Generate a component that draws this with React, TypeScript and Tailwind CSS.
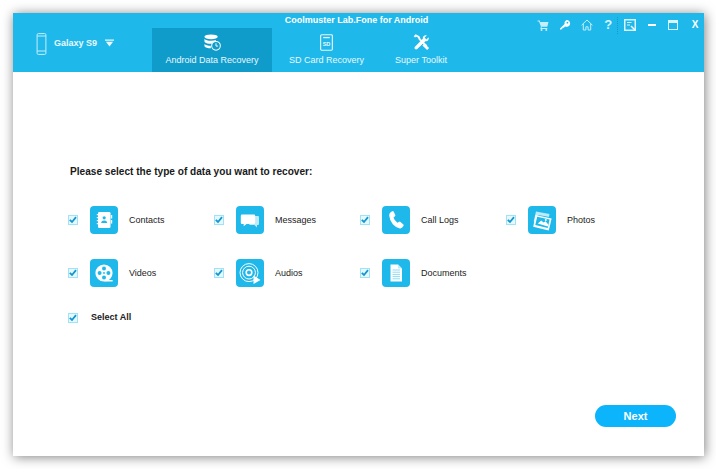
import { ReactNode } from 'react';

function Check() {
  return (
    <span className="ml-[-1px] flex h-[10px] w-[10px] shrink-0 items-center justify-center border border-[#9fe3f8] bg-[#e6f8fe]">
      <svg viewBox="0 0 8 8" className="h-[8px] w-[8px]" fill="none">
        <path d="M.8 3.8 L3 6 L7 1.2" stroke="#1496cf" strokeWidth="1.8" />
      </svg>
    </span>
  );
}

const ContactsIcon = (
  <svg viewBox="0 0 28 28" className="h-7 w-7">
    <rect x="8" y="6" width="12.500" height="16" rx="1.200" fill="#fff" />
    <rect x="6.800" y="8" width="2.400" height="1.200" fill="#fff" />
    <rect x="6.800" y="11" width="2.400" height="1.200" fill="#fff" />
    <rect x="6.800" y="14" width="2.400" height="1.200" fill="#fff" />
    <rect x="6.800" y="17" width="2.400" height="1.200" fill="#fff" />
    <rect x="20.800" y="9" width="1.400" height="3.500" fill="#fff" />
    <rect x="20.800" y="14" width="1.400" height="3.500" fill="#fff" />
    <circle cx="14.200" cy="11.800" r="1.600" fill="#1fb8ea" />
    <path d="M11.200 17 q0-2.600 3-2.600 t3 2.600 z" fill="#1fb8ea" />
  </svg>
);

const MessagesIcon = (
  <svg viewBox="0 0 28 28" className="h-7 w-7">
    <path d="M19 10 h3 q1 0 1 1 v7 q0 1-1 1 h-1 v2.500 l-2.600-2.500 h-5 v-1.500 h5.600 z" fill="#bfeafa" />
    <path d="M6 8.500 h12 q1.200 0 1.200 1.200 v7 q0 1.200-1.200 1.200 h-7.500 l-2.800 2.400 v-2.400 h-1.700 q-1.200 0-1.200-1.200 v-7 q0-1.200 1.200-1.200 z" fill="#fff" />
  </svg>
);

const CallIcon = (
  <svg viewBox="0 0 28 28" className="h-7 w-7">
    <path d="M8.200 6.200 l2.200-1 q.8-.3 1.200.4 l1.700 3.400 q.3.700-.3 1.200 l-1.500 1.200 q.8 2.800 3.900 5.400 l1.800-1 q.7-.4 1.300.1 l2.900 2.600 q.5.5.1 1.200 l-1.300 1.900 q-.8 1-2.400.8 q-3.800-.6-7-4.200 q-3.200-3.600-3.600-8.600 q-.1-2.500 1.600-3.400 z" fill="#fff" />
  </svg>
);

const PhotosIcon = (
  <svg viewBox="0 0 28 28" className="h-7 w-7">
    <path d="M8 5.500 l13.500 2.400 l-.6 3 l-2-.3 l-9-1.600 l-1.600 7 l-2.600-.6 z" fill="#bfeafa" />
    <path d="M7.600 9 l16 3.400 l-2.800 12 l-15.600-3.600 z" fill="#fff" />
    <path d="M9.200 10.800 l12.400 2.700 l-1.900 8.400 l-12.400-2.800 z" fill="#1fb8ea" />
    <path d="M9.800 17.600 l3.400-3 l2.400 2 l2-1.400 l2.600 3.200 l-.5 2 z" fill="#fff" />
    <circle cx="17.800" cy="13.900" r="1" fill="#fff" />
  </svg>
);

const VideosIcon = (
  <svg viewBox="0 0 28 28" className="h-7 w-7">
    <circle cx="14" cy="14" r="8.600" fill="#fff" />
    <path d="M14 22.600 h8.600 v-1.600 h-5 z" fill="#fff" />
    <circle cx="14" cy="9.600" r="2" fill="#1fb8ea" />
    <circle cx="14" cy="18.400" r="2" fill="#1fb8ea" />
    <circle cx="9.600" cy="14" r="2" fill="#1fb8ea" />
    <circle cx="18.400" cy="14" r="2" fill="#1fb8ea" />
    <circle cx="14" cy="14" r=".9" fill="#1fb8ea" />
  </svg>
);

const AudiosIcon = (
  <svg viewBox="0 0 28 28" className="h-7 w-7">
    <circle cx="13" cy="13.600" r="9" fill="none" stroke="#fff" strokeWidth="1" />
    <circle cx="13" cy="13.600" r="6.400" fill="none" stroke="#fff" strokeWidth="1" />
    <circle cx="13" cy="13.600" r="2.800" fill="none" stroke="#fff" strokeWidth="1.600" />
    <path d="M17.500 16.500 l7 4.600 l-7 4 z" fill="#fff" />
  </svg>
);

const DocumentsIcon = (
  <svg viewBox="0 0 28 28" className="h-7 w-7">
    <path d="M8.500 5.500 h7.500 l4 4 v13 h-11.500 z" fill="#fff" />
    <path d="M16 5.500 l4 4 h-4 z" fill="#bfeafa" />
    <rect x="10.500" y="10.500" width="7.500" height="1" fill="#8fdcf5" />
    <rect x="10.500" y="12.700" width="7.500" height="1" fill="#8fdcf5" />
    <rect x="10.500" y="14.900" width="7.500" height="1" fill="#8fdcf5" />
    <rect x="10.500" y="17.100" width="7.500" height="1" fill="#8fdcf5" />
    <rect x="10.500" y="19.300" width="7.500" height="1" fill="#8fdcf5" />
  </svg>
);

const items: { label: string; icon: ReactNode }[] = [
  { label: 'Contacts', icon: ContactsIcon },
  { label: 'Messages', icon: MessagesIcon },
  { label: 'Call Logs', icon: CallIcon },
  { label: 'Photos', icon: PhotosIcon },
  { label: 'Videos', icon: VideosIcon },
  { label: 'Audios', icon: AudiosIcon },
  { label: 'Documents', icon: DocumentsIcon },
];

function Tab({ label, icon, className }: { label: string; icon: ReactNode; className: string }) {
  return (
    <div className={`flex h-full flex-col items-center pt-[4px] ${className}`}>
      <div className="flex h-[20px] items-center justify-center">{icon}</div>
      <span className="mt-[2px] text-[9px] leading-[12px] text-[#e8f8fe]">{label}</span>
    </div>
  );
}

export default function App() {
  return (
    <div className="h-[469px] w-[716px] overflow-hidden bg-white pl-[13px] pt-[13px] font-['Liberation_Sans',Arial,sans-serif]">
      <div className="flex h-[443px] w-[691px] flex-col bg-white shadow-[1px_1px_11px_rgba(0,0,0,0.5)]">
        <header className="h-[59px] shrink-0 bg-[#1fb8ea] text-white">
          <div className="grid h-[15px] grid-cols-[1fr_auto_1fr] items-start">
            <div />
            <span className="mr-[4px] mt-[1px] text-[9px] font-bold leading-[12px]">Coolmuster Lab.Fone for Android</span>
            <div className="flex items-center justify-end gap-[9.700px] pr-[3px] pt-[5px]">
              <svg viewBox="0 0 12 12" className="h-[12px] w-[12px]">
                <path d="M.5 1.500h2.300l.4 1.500h8.300l-1.200 4.800H4.400L4.700 9h5.600v1H3.300l.6-2.400L2 2.500H.5z" fill="#c5eefb" />
                <circle cx="4.500" cy="11" r="1" fill="#c5eefb" />
                <circle cx="9.300" cy="11" r="1" fill="#c5eefb" />
              </svg>
              <svg viewBox="0 0 12 12" className="h-[12px] w-[12px]">
                <path d="M7.600 1a3.400 3.400 0 1 1-1.500 6.400l-1.400 1.400H3.300v1.400H1.800L1 11V9.500l4.600-4.600A3.400 3.400 0 0 1 7.600 1z" fill="#fff" />
                <circle cx="8.400" cy="3.700" r=".9" fill="#1fb8ea" />
              </svg>
              <svg viewBox="0 0 12 12" className="h-[12px] w-[12px]" fill="none">
                <path d="M.6 6.200 6 1l5.400 5.200M2.300 5v6h2.600V7.800h2.200V11h2.600V5" stroke="#c5eefb" strokeWidth="1" />
              </svg>
              <span className="w-[12px] text-center text-[13px] font-bold leading-[13px] text-[#d8f4fd]">?</span>
              <span className="relative">
                <span className="absolute -left-[7px] top-[-2px] h-[17px] border-l border-dotted border-[#109ccb]" />
                <svg viewBox="0 0 12 12" className="h-[12px] w-[12px]" fill="none">
                  <rect x=".75" y=".75" width="10.500" height="10.500" stroke="#d8f4fd" strokeWidth="1.500" />
                  <path d="M3 3.500h4.500M3 6h3" stroke="#d8f4fd" />
                  <path d="M7 7l4 4" stroke="#fff" strokeWidth="1.500" />
                </svg>
              </span>
              <span className="flex w-[12px] justify-center">
                <span className="h-[2px] w-[8px] bg-white" />
              </span>
              <span className="flex w-[12px] justify-center">
                <span className="h-[10px] w-[10px] border border-t-[3px] border-[#d8f4fd]" />
              </span>
              <span className="w-[12px] text-center text-[10px] font-bold leading-[12px]">X</span>
            </div>
          </div>
          <div className="flex h-[44px]">
            <div className="flex h-[27px] w-[139px] items-center pl-[23px] pt-[5px]">
              <svg viewBox="0 0 10 22" className="h-[22px] w-[11px]" fill="none">
                <rect x=".6" y=".6" width="8.800" height="20.800" rx="1.200" stroke="#c5eefb" strokeWidth="1" />
                <path d="M.6 3h8.800M.6 18h8.800" stroke="#c5eefb" strokeWidth="1" />
              </svg>
              <span className="ml-[7px] text-[9px] font-bold text-[#e8f8fe]">Galaxy S9</span>
              <svg viewBox="0 0 10 8" className="mb-[2px] ml-[8px] h-[8px] w-[9px]">
                <path d="M0 0h10v1.600H0zM1 2.600h8L5 8z" fill="#e8f8fe" />
              </svg>
            </div>
            <Tab
              className="w-[120px] bg-[#109ccb]"
              label="Android Data Recovery"
              icon={
                <svg viewBox="0 0 18 18" className="h-[17px] w-[17px]">
                  <ellipse cx="7.500" cy="3" rx="7" ry="2.600" fill="#fff" />
                  <path d="M.5 5c1 1.600 3.600 2.200 7 2.200 2 0 3.600-.2 5-.8v1c-2.500 1-3.500 1.600-4.500 3-3.500 0-6.500-.6-7.500-2.300zM.5 10.500c1.200 1.300 3.500 1.900 6.600 2l.2 2.700c-3.500 0-5.800-.8-6.800-2.200z" fill="#fff" />
                  <circle cx="12.700" cy="12.500" r="4.600" fill="#109ccb" stroke="#fff" strokeWidth="1.100" />
                  <path d="M12.700 9.800v3h2.200" fill="none" stroke="#fff" strokeWidth="1" />
                </svg>
              }
            />
            <Tab
              className="w-[109px]"
              label="SD Card Recovery"
              icon={
                <svg viewBox="0 0 14 18" className="h-[17px] w-[13px]" fill="none">
                  <rect x=".7" y=".7" width="12.600" height="16.600" rx="1" stroke="#e8f8fe" strokeWidth="1.200" />
                  <rect x="3.500" y="3" width="7" height="1.400" fill="#e8f8fe" />
                  <text x="7" y="13" textAnchor="middle" fontSize="6" fontWeight="700" fill="#e8f8fe">SD</text>
                </svg>
              }
            />
            <Tab
              className="w-[80px]"
              label="Super Toolkit"
              icon={
                <svg viewBox="0 0 18 18" className="h-[17px] w-[17px]" fill="none">
                  <path d="M1.500 3 3 1.500l3 1.500 1 2.500 7.500 7.500" stroke="#fff" strokeWidth="2" />
                  <path d="M11 11l5 5" stroke="#fff" strokeWidth="3" />
                  <path d="M16.500 3.500l-2.300 2.200-1.900-1.900 2.300-2.300c-2.300-.7-4.600 1-4.200 3.500l-8.300 8.600c-.7.800-.7 1.700 0 2.400.7.700 1.600.7 2.400 0l8.600-8.300c2.500.4 4.200-1.900 3.400-4.200z" fill="#fff" />
                </svg>
              }
            />
          </div>
        </header>

        <main className="flex flex-1 flex-col pl-[57px]">
          <h1 className="mt-[93px] text-[10.100px] font-bold leading-[13px] text-[#1a1a1a]">
            Please select the type of data you want to recover:
          </h1>
          <div className="ml-[-1px] mt-[28px] grid w-[584px] grid-cols-4 gap-y-[25px]">
            {items.map((it) => (
              <div key={it.label} className="flex h-[28px] items-center">
                <Check />
                <span className="ml-[12px] flex h-[28px] w-[28px] items-center justify-center rounded-[4px] bg-[#1fb8ea]">
                  {it.icon}
                </span>
                <span className="ml-[11px] pt-[1px] text-[9px] text-[#222]">{it.label}</span>
              </div>
            ))}
          </div>
          <label className="ml-[-1px] mt-[17px] flex h-[28px] items-center">
            <Check />
            <span className="ml-[13px] text-[9px] font-bold text-[#222]">Select All</span>
          </label>
          <div className="mt-[73px] flex w-[606px] justify-end">
            <button className="h-[22px] w-[81px] rounded-full bg-[#0cb4fb] text-[11px] font-bold text-white">
              Next
            </button>
          </div>
        </main>
      </div>
    </div>
  );
}
